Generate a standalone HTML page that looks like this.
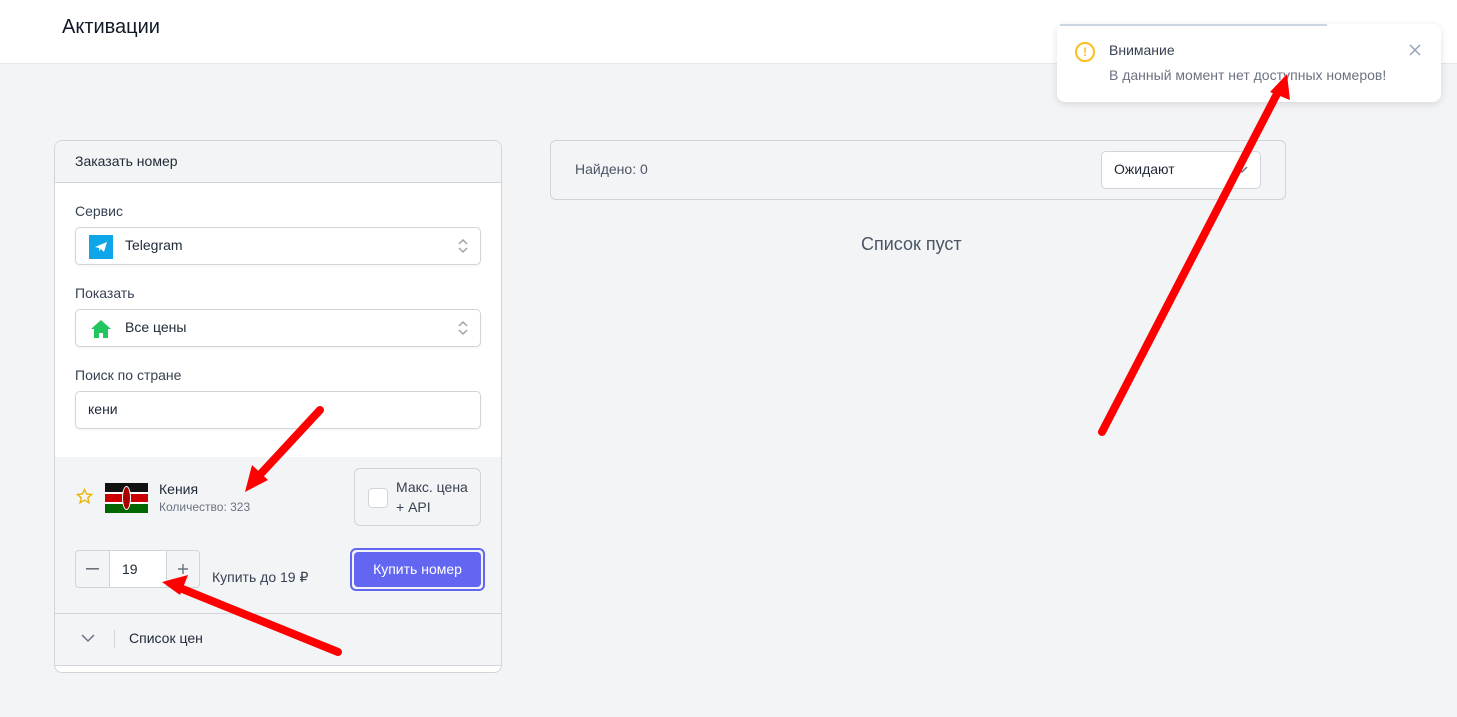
<!DOCTYPE html>
<html><head><meta charset="utf-8"><style>
*{box-sizing:border-box;margin:0;padding:0}
body{width:1457px;height:717px;background:#f3f4f6;font-family:"Liberation Sans",sans-serif;position:relative;overflow:hidden;color:#1f2937}
.top{position:absolute;left:0;top:0;width:1457px;height:64px;background:#fff;border-bottom:1px solid #e5e7eb}
.top h1{position:absolute;left:62px;top:16px;font-size:20px;font-weight:400;color:#111827}
.card{position:absolute;left:54px;top:140px;width:448px;height:533px;background:#fff;border:1px solid #d1d5db;border-radius:8px;overflow:hidden}
.ch{height:42px;background:#f3f4f6;border-bottom:1px solid #d1d5db;padding:12px 20px;font-size:14px}
.lbl{position:absolute;left:20px;font-size:14px;color:#374151}
.sel{position:absolute;left:20px;width:406px;height:38px;border:1px solid #d1d5db;border-radius:5px;box-shadow:0 1px 2px rgba(0,0,0,.06);font-size:14px;padding:9px 0 0 49px;background:#fff}
.arr{position:absolute;right:12px;top:10px}
.gray{position:absolute;left:0;top:316px;width:448px;height:157px;background:#f3f4f6;border-bottom:1px solid #d1d5db}
.foot{position:absolute;left:0;top:473px;width:448px;height:52px;background:#f3f4f6;border-bottom:1px solid #d1d5db}
.rc{position:absolute;left:550px;top:140px;width:736px;height:60px;background:#f3f4f6;border:1px solid #d1d5db;border-radius:6px}
.toast{position:absolute;left:1057px;top:24px;width:384px;height:78px;background:#fff;border-radius:8px;box-shadow:0 2px 8px rgba(0,0,0,.12)}
</style></head><body>
<div class="top"><h1>Активации</h1></div>
<div class="card">
 <div class="ch">Заказать номер</div>
 <div class="lbl" style="top:62px">Сервис</div>
 <div class="sel" style="top:86px"><div style="position:absolute;left:13px;top:7px;width:24px;height:24px;background:#0ea5e9"><svg width="24" height="24"><path d="M6 12 L18 7 L15 17 L12 14 L10 16 L10 13 Z" fill="#fff"/></svg></div>Telegram<svg class="arr" width="10" height="16"><path d="M1 6 L5 2 L9 6 M1 10 L5 14 L9 10" stroke="#9ca3af" stroke-width="1.5" fill="none"/></svg></div>
 <div class="lbl" style="top:144px">Показать</div>
 <div class="sel" style="top:168px"><svg style="position:absolute;left:14px;top:8px" width="22" height="22"><path d="M11 2 L21 11 L18 11 L18 20 L13 20 L13 15 L9 15 L9 20 L4 20 L4 11 L1 11 Z" fill="#22c55e"/></svg>Все цены<svg class="arr" width="10" height="16"><path d="M1 6 L5 2 L9 6 M1 10 L5 14 L9 10" stroke="#9ca3af" stroke-width="1.5" fill="none"/></svg></div>
 <div class="lbl" style="top:226px">Поиск по стране</div>
 <div class="sel" style="top:250px;padding-left:12px">кени</div>
 <div class="gray">
  <svg style="position:absolute;left:21px;top:31px" width="17" height="17"><path d="M8.5 1.5 L10.6 6 L15.5 6.5 L11.8 9.8 L12.9 14.7 L8.5 12.2 L4.1 14.7 L5.2 9.8 L1.5 6.5 L6.4 6 Z" fill="none" stroke="#eab308" stroke-width="1.4"/></svg>
  <div style="position:absolute;left:50px;top:26px;width:43px;height:30px"><div style="height:9px;background:#111"></div><div style="height:2px;background:#fff"></div><div style="height:8px;background:#c00"></div><div style="height:2px;background:#fff"></div><div style="height:9px;background:#060"></div><div style="position:absolute;left:17px;top:3px;width:9px;height:24px;border-radius:50%;background:#a00;border:1px solid #fff"></div></div>
  <div style="position:absolute;left:104px;top:24px;font-size:14px">Кения</div>
  <div style="position:absolute;left:104px;top:43px;font-size:12px;color:#6b7280">Количество: 323</div>
  <div style="position:absolute;left:299px;top:11px;width:127px;height:58px;border:1px solid #d1d5db;border-radius:6px"><div style="position:absolute;left:13px;top:19px;width:20px;height:20px;background:#fff;border:1px solid #d1d5db;border-radius:4px"></div><div style="position:absolute;left:41px;top:8px;font-size:14px;line-height:20px;color:#374151">Макс. цена<br>+ API</div></div>
  <div style="position:absolute;left:20px;top:93px;width:125px;height:38px;border:1px solid #d1d5db;border-radius:4px;background:#f3f4f6"><div style="position:absolute;left:33px;top:0;width:58px;height:36px;background:#fff;border-left:1px solid #d1d5db;border-right:1px solid #d1d5db;padding:10px 12px;font-size:14px">19</div><svg style="position:absolute;left:10px;top:17px" width="13" height="2"><rect width="13" height="1.6" fill="#6b7280"/></svg><svg style="position:absolute;left:101px;top:12px" width="12" height="12"><path d="M6 1V11M1 6H11" stroke="#6b7280" stroke-width="1.4"/></svg></div>
  <div style="position:absolute;left:157px;top:112px;font-size:14px;color:#374151">Купить до 19 ₽</div>
  <div style="position:absolute;left:295px;top:91px;width:135px;height:43px;border:2px solid #6366f1;border-radius:6px;padding:2px"><div style="background:#6366f1;height:35px;border-radius:4px;color:#fff;font-size:14px;text-align:center;line-height:35px">Купить номер</div></div>
 </div>
 <div class="foot"><svg style="position:absolute;left:26px;top:20px" width="14" height="9"><path d="M1 1 L7 7 L13 1" stroke="#6b7280" stroke-width="1.5" fill="none"/></svg><div style="position:absolute;left:59px;top:16px;width:1px;height:18px;background:#d1d5db"></div><div style="position:absolute;left:74px;top:16px;font-size:14px">Список цен</div></div>
</div>
<div class="rc"><div style="position:absolute;left:24px;top:20px;font-size:14px;color:#4b5563">Найдено: 0</div><div style="position:absolute;left:550px;top:10px;width:160px;height:38px;background:#fff;border:1px solid #d1d5db;border-radius:5px;padding:9px 12px;font-size:14px">Ожидают<svg style="position:absolute;right:12px;top:14px" width="12" height="8"><path d="M1 1 L6 6 L11 1" stroke="#6b7280" stroke-width="1.5" fill="none"/></svg></div></div>
<div style="position:absolute;left:861px;top:234px;font-size:18px;color:#4b5563">Список пуст</div>
<div class="toast"><div style="position:absolute;left:3px;top:0;width:267px;height:2px;background:#cbd5e1"></div>
 <div style="position:absolute;left:18px;top:18px;width:20px;height:20px;border:2px solid #fbbf24;border-radius:50%;color:#fbbf24;font-size:12px;font-weight:bold;text-align:center;line-height:16px">!</div>
 <div style="position:absolute;left:52px;top:18px;font-size:14px;color:#374151">Внимание</div>
 <div style="position:absolute;left:52px;top:43px;font-size:14px;color:#6b7280">В данный момент нет доступных номеров!</div>
 <svg style="position:absolute;left:352px;top:20px" width="12" height="12"><path d="M1 1L11 11M11 1L1 11" stroke="#94a3b8" stroke-width="1.5"/></svg>
</div>
<svg style="position:absolute;left:0;top:0" width="1457" height="717">
<g stroke="#f00" stroke-width="8" stroke-linecap="round" fill="#f00">
<line x1="320" y1="410" x2="255" y2="480"/>
<line x1="338" y1="652" x2="175" y2="586"/>
<line x1="1102" y1="432" x2="1280" y2="88"/>
</g>
<g fill="#f00">
<polygon points="245,492 252,465 268,480"/>
<polygon points="162,582 188,575 180,595"/>
<polygon points="1287,74 1290,100 1270,92"/>
</g>
</svg>
</body></html>
